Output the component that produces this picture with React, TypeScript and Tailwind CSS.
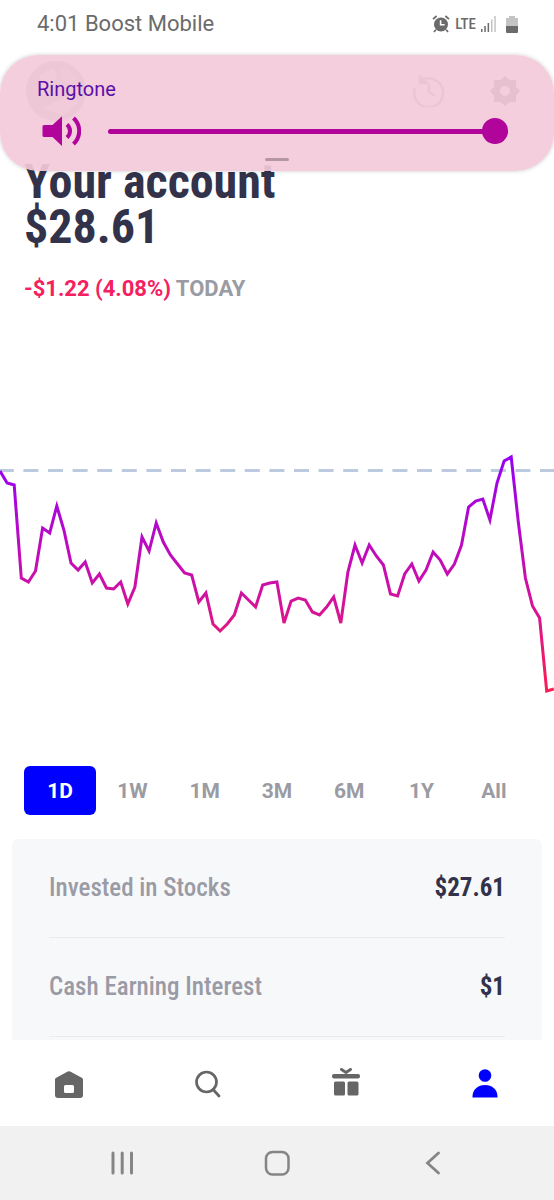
import { useState } from "react"

const ranges = ["1D", "1W", "1M", "3M", "6M", "1Y", "All"]

const balances = [
    { label: "Invested in Stocks", value: "$27.61" },
    { label: "Cash Earning Interest", value: "$1" },
]

// one sample every STEP units, y grows downwards
const STEP = 7.1
const prices = [
    31, 43, 45, 138, 142, 131, 88, 93, 66, 90, 123, 130, 122, 143, 134, 148, 149, 142, 164, 147,
    97, 111, 83, 102, 115, 124, 133, 135, 162, 153, 184, 191, 184, 175, 153, 160, 167, 145, 143, 142,
    183, 161, 158, 160, 172, 175, 167, 157, 183, 132, 105, 123, 105, 116, 125, 154, 156, 134, 124, 141,
    130, 112, 120, 134, 124, 105, 67, 61, 59, 80, 43, 21, 17, 82, 138, 166, 178, 251, 249,
]

function StatusBar() {
    return (
        <div className="flex h-[54px] items-center justify-between pr-9 pb-[6px] pl-[37px] text-[#6b6b6b]">
            <span className="text-[22px] leading-7">4:01 Boost Mobile</span>
            <div className="flex items-center">
                <svg className="mr-[5px] h-[18px] w-[18px]" viewBox="0 0 18 18" fill="none">
                    <circle cx="9" cy="9.5" r="7" fill="currentColor" />
                    <path d="M1 4.2 4.6 1M17 4.2 13.4 1M3.8 14.8 2 17M14.2 14.8 16 17" stroke="currentColor" strokeWidth="1.8" />
                    <path d="M8.6 5.2v4.6h4" stroke="white" strokeWidth="1.6" />
                </svg>
                <span className="mr-[5px] font-['Roboto_Condensed','Roboto',sans-serif] text-[15px] leading-5 font-medium">LTE</span>
                <svg className="mr-[9px] h-4 w-4" viewBox="0 0 16 16" fill="currentColor">
                    <path d="M0 13h1.500v3H0zM3.3 10h1.500v6H3.3zM6.6 7h1.500v9H6.600z" />
                    <path d="M10 3.5h1.500V16H10zM13.3 0h1.500v16h-1.500z" opacity=".4" />
                </svg>
                <svg className="h-[17px] w-3" viewBox="0 0 12 17" fill="currentColor">
                    <path d="M3 0h6v2h3v9H0V2h3z" opacity=".4" />
                    <path d="M0 10h12v6a1 1 0 0 1-1 1H1a1 1 0 0 1-1-1z" />
                </svg>
            </div>
        </div>
    )
}

function VolumePanel() {
    const [volume, setVolume] = useState(100)
    return (
        <div className="absolute inset-x-0 top-[55px] flex h-[116px] flex-col rounded-[38px] bg-[#f3cad9]/92 pt-5 pr-[46px] pl-[37px] shadow-[0_0_4px_rgba(0,0,0,0.2)]">
            <label htmlFor="ringtone" className="text-[20px] leading-7 text-[#5a0fa8]">
                Ringtone
            </label>
            <div className="flex h-14 items-center gap-[27px]">
                <svg className="ml-[5px] h-8 w-[39px] shrink-0" viewBox="0 0 39 32" fill="none">
                    <path d="M2 10h8.5L20 1.2V31L10.5 22H2a1.5 1.5 0 0 1-1.5-1.5v-9A1.5 1.5 0 0 1 2 10z" fill="#b0049b" />
                    <path d="M25 9.5c4 3.6 4 9.4 0 13M31.5 3c7.6 7.2 7.6 18.8 0 26" stroke="#b0049b" strokeWidth="4" />
                </svg>
                <input
                    id="ringtone"
                    type="range"
                    value={volume}
                    onChange={(e) => setVolume(Number(e.target.value))}
                    className="h-[26px] min-w-0 flex-1 cursor-pointer appearance-none bg-transparent [&::-webkit-slider-runnable-track]:h-[5px] [&::-webkit-slider-runnable-track]:rounded-full [&::-webkit-slider-runnable-track]:bg-[#b0049b] [&::-webkit-slider-thumb]:-mt-[11px] [&::-webkit-slider-thumb]:size-[26px] [&::-webkit-slider-thumb]:appearance-none [&::-webkit-slider-thumb]:rounded-full [&::-webkit-slider-thumb]:bg-[#b0049b]"
                />
            </div>
            <div className="absolute bottom-[10px] left-1/2 h-[3px] w-6 -translate-x-1/2 rounded-full bg-[#b597a4]" />
        </div>
    )
}

function AccountHeader() {
    return (
        <header className="px-6 pt-[6px]">
            <div className="flex h-[61px] items-center justify-between">
                <svg className="ml-[2px] size-[60px]" viewBox="0 0 60 60">
                    <circle cx="30" cy="30" r="30" fill="#a3a0a6" />
                    <path d="M14 14 28 7l3 9-16 22zM16 47l30-14 6 8-14 14z" fill="#d9d6db" />
                    <path d="M34 6c10 2 18 10 20 20l-16-4z" fill="#bfbcc2" />
                </svg>
                <div className="flex items-center gap-[45px] pr-[10px]">
                    <button aria-label="History" className="text-[#8b8b93]">
                        <svg className="size-8" viewBox="0 0 32 32" fill="none" stroke="currentColor" strokeWidth="2.5">
                            <path d="M8 5.5A14.5 14.5 0 1 1 1.8 13.5" />
                            <path d="M16 10v7l6 3.5" />
                            <path d="M7 1v7h7z" fill="currentColor" />
                        </svg>
                    </button>
                    <button aria-label="Settings" className="text-[#4a4a55]">
                        <svg className="size-[30px]" viewBox="0 0 30 30" fill="currentColor" fillRule="evenodd">
                            <path d="m15 0 4.6 4H26v6.4l4 4.6-4 4.6V26h-6.4L15 30l-4.6-4H4v-6.4L0 15l4-4.6V4h6.4zm0 10a5 5 0 1 0 0 10 5 5 0 0 0 0-10z" />
                        </svg>
                    </button>
                </div>
            </div>
            <h1 className="mt-[38px] font-['Roboto_Condensed','Roboto',sans-serif] text-[48px] leading-[45px] font-bold text-[#32334a]">
                Your account
                <br />
                $28.61
            </h1>
            <p className="mt-[26px] text-[22px] leading-7 font-bold text-[#9a9ba3]">
                <span className="text-[#f4205f]">-$1.22 (4.08%)</span> TODAY
            </p>
        </header>
    )
}

function PriceChart() {
    const points = prices.map((y, i) => `${i * STEP},${y}`).join(" ")
    return (
        <svg className="mt-[137px] h-auto w-full" viewBox="0 0 554 260" fill="none" role="img" aria-label="Account value today">
            <defs>
                <linearGradient id="trend" gradientUnits="userSpaceOnUse" x1="0" y1="17" x2="0" y2="251">
                    <stop offset="0" stopColor="#9600f5" />
                    <stop offset="0.5" stopColor="#c80fae" />
                    <stop offset="1" stopColor="#fa1e55" />
                </linearGradient>
            </defs>
            <path d="M0 30.5H554" stroke="#bccae0" strokeWidth="3" strokeDasharray="15 9.6" strokeDashoffset="1.2" />
            <polyline points={points} stroke="url(#trend)" strokeWidth="3" />
        </svg>
    )
}

function RangeTabs() {
    const [active, setActive] = useState("1D")
    return (
        <div className="mx-6 mt-[66px] grid grid-cols-7">
            {ranges.map((range) => (
                <button
                    key={range}
                    onClick={() => setActive(range)}
                    className={`h-[49px] rounded-md text-[21px] leading-7 font-bold ${active === range ? "bg-[#0000ff] text-white" : "text-[#9a9ba3]"}`}
                >
                    {range}
                </button>
            ))}
        </div>
    )
}

function Balances() {
    return (
        <dl className="mx-3 mt-6 rounded-t-md bg-[#f7f8fa] px-[37px] pb-[3px] font-['Roboto_Condensed','Roboto',sans-serif]">
            {balances.map((row) => (
                <div key={row.label} className="flex h-[99px] items-center justify-between border-b border-[#eaebee] text-[25px] leading-8">
                    <dt className="font-medium text-[#9a9ba5]">{row.label}</dt>
                    <dd className="font-bold text-[#32334a]">{row.value}</dd>
                </div>
            ))}
        </dl>
    )
}

function TabBar() {
    return (
        <nav className="grid h-[86px] grid-cols-4 bg-white pt-[2px] text-[#666]">
            <button aria-label="Home" className="flex items-center justify-center">
                <svg className="size-8" viewBox="0 0 32 32" fill="currentColor" fillRule="evenodd">
                    <path d="M14.8 3.5a2.4 2.4 0 0 1 2.4 0l11.6 6.3a2.2 2.2 0 0 1 1.2 2V27a3 3 0 0 1-3 3H5a3 3 0 0 1-3-3V11.8a2.2 2.2 0 0 1 1.2-2zM12.5 17a1.5 1.5 0 0 0-1.5 1.5v5a1.5 1.5 0 0 0 1.5 1.5h7a1.5 1.5 0 0 0 1.5-1.5v-5a1.5 1.5 0 0 0-1.5-1.5z" />
                </svg>
            </button>
            <button aria-label="Search" className="flex items-center justify-center">
                <svg className="size-8" viewBox="0 0 32 32" fill="none" stroke="currentColor" strokeWidth="2.7" strokeLinecap="round">
                    <circle cx="14.5" cy="14" r="10" />
                    <path d="m21.5 22 5.5 6" />
                </svg>
            </button>
            <button aria-label="Rewards" className="flex items-center justify-center">
                <svg className="size-8" viewBox="0 0 32 32" fill="currentColor">
                    <path d="m11.5 1.5 4.5 3 4.5-3" fill="none" stroke="currentColor" strokeWidth="3" strokeLinecap="round" />
                    <rect x="2" y="6" width="28" height="4.5" rx="2" />
                    <rect x="4" y="13.5" width="11" height="14" rx="1.5" />
                    <rect x="17.5" y="13.5" width="11" height="14" rx="1.5" />
                </svg>
            </button>
            <button aria-label="Account" className="flex items-center justify-center text-[#0000ff]">
                <svg className="size-8" viewBox="0 0 32 32" fill="currentColor">
                    <circle cx="16" cy="7.5" r="6.3" />
                    <path d="M3.5 29.5v-1C3.5 21.5 9 17 16 17s12.5 4.5 12.5 11.5v1z" />
                </svg>
            </button>
        </nav>
    )
}

function SystemBar() {
    return (
        <div className="grid h-[74px] grid-cols-3 bg-[#f1f1f1] px-[45px] text-[#858585]">
            <button aria-label="Recents" className="flex items-center justify-center">
                <svg className="size-7" viewBox="0 0 28 28" stroke="currentColor" strokeWidth="3" strokeLinecap="round">
                    <path d="M5 4v20M14.2 4v20M23.5 4v20" />
                </svg>
            </button>
            <button aria-label="Home screen" className="flex items-center justify-center">
                <svg className="size-7" viewBox="0 0 28 28" fill="none" stroke="currentColor" strokeWidth="2.5">
                    <rect x="3" y="3" width="22.5" height="22.5" rx="6.5" />
                </svg>
            </button>
            <button aria-label="Back" className="flex items-center justify-center">
                <svg className="size-7" viewBox="0 0 28 28" fill="none" stroke="currentColor" strokeWidth="2.8" strokeLinecap="round">
                    <path d="M20.5 4 9.5 14l11 10" />
                </svg>
            </button>
        </div>
    )
}

export default function App() {
    return (
        <div className="relative flex min-h-screen flex-col bg-white font-['Roboto',sans-serif]">
            <StatusBar />
            <main className="flex-1">
                <AccountHeader />
                <PriceChart />
                <RangeTabs />
                <Balances />
            </main>
            <TabBar />
            <SystemBar />
            <VolumePanel />
        </div>
    )
}
